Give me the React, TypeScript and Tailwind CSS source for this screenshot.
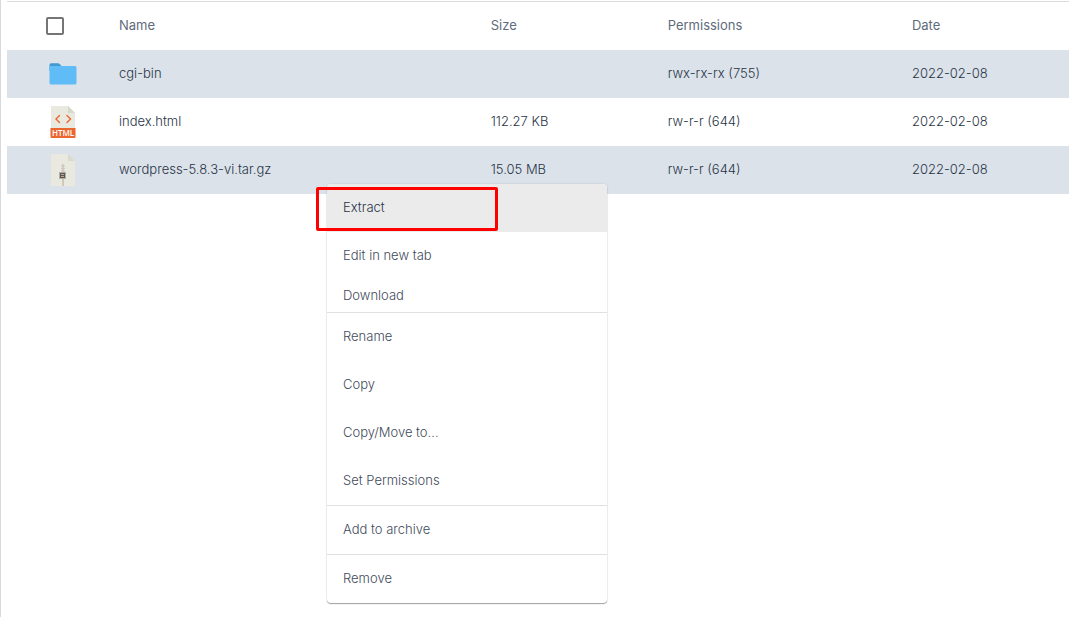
import React from "react";

type FileKind = "folder" | "html" | "archive";

interface FileEntry {
  kind: FileKind;
  name: string;
  size: string;
  permissions: string;
  date: string;
}

const files: FileEntry[] = [
  { kind: "folder", name: "cgi-bin", size: "", permissions: "rwx-rx-rx (755)", date: "2022-02-08" },
  { kind: "html", name: "index.html", size: "112.27 KB", permissions: "rw-r-r (644)", date: "2022-02-08" },
  { kind: "archive", name: "wordpress-5.8.3-vi.tar.gz", size: "15.05 MB", permissions: "rw-r-r (644)", date: "2022-02-08" },
];

const menuGroups: string[][] = [
  ["Rename", "Copy", "Copy/Move to...", "Set Permissions"],
  ["Add to archive"],
  ["Remove"],
];

function FolderIcon() {
  return (
    <svg width="28" height="22" viewBox="0 0 28 22" aria-hidden="true">
      <path d="M.5 8V2Q.5.3 2.200.3H9q1 0 1.700.7L12.500 3V8z" fill="#4399d1" />
      <path d="M.5 3H26q1.500 0 1.500 1.500V20q0 1.500-1.500 1.500H2Q.5 21.500.5 20z" fill="#60bcf7" />
    </svg>
  );
}

function HtmlIcon() {
  return (
    <svg width="26" height="32" viewBox="0 0 26 32" aria-hidden="true">
      <path d="M1 0H18L25 7V23H1z" fill="#e9e9e0" />
      <path d="M18 0L25 7H18z" fill="#d6d8c8" />
      <path d="M9.500 9.500L6 13L9.500 16.500M17 9.500L20.500 13L17 16.500" fill="none" stroke="#ec6630" strokeWidth="1.400" strokeLinecap="round" />
      <path d="M.5 22H25.500V31q0 1-1 1h-23q-1 0-1-1z" fill="#ec6630" />
      <text x="13" y="30" textAnchor="middle" fill="#fff" fontFamily="Open Sans, sans-serif" fontSize="8" fontWeight="600">HTML</text>
    </svg>
  );
}

function ArchiveIcon() {
  return (
    <svg width="26" height="32" viewBox="0 0 26 32" aria-hidden="true">
      <path d="M1 0H18L25 7V32H1z" fill="#e9e9e0" />
      <path d="M18 0L25 7H18z" fill="#d9dccd" />
      <path d="M12 10h2v8h-2z" fill="#d5cbc5" />
      <path d="M11 12h4M11 14.500h4M11 17h4" stroke="#d2c5bf" strokeWidth="1" />
      <path d="M12 25h2v7h-2z" fill="#cec8bd" />
      <path d="M9 18h7v7H9z" fill="#aeb0ad" />
      <path d="M10 19h5v5h-5z" fill="#5b5754" />
      <path d="M11 20h3v1h-3zM11 22h3v1h-3z" fill="#c7a781" />
    </svg>
  );
}

const icons: Record<FileKind, React.ReactElement> = {
  folder: <FolderIcon />,
  html: <HtmlIcon />,
  archive: <ArchiveIcon />,
};

const itemClass =
  "flex w-full items-center px-4 pb-px text-left text-[13px] font-light text-[#3f4b5b] hover:bg-[#ebebec]";

function ContextMenu() {
  return (
    <div
      role="menu"
      className="absolute left-[326px] top-[184px] w-[280px] rounded bg-white shadow-[0_1px_1px_rgba(0,0,0,0.35),0_0_2px_rgba(0,0,0,0.15)]"
    >
      <div className="relative">
        <button role="menuitem" className="flex h-12 w-full items-center rounded-t bg-[#ebebec] px-4 pb-px text-left text-[13px] font-light text-[#283446]">
          Extract
        </button>
        <span className="pointer-events-none absolute -left-[11px] top-[3px] h-[44px] w-[182px] rounded-xs border-3 border-[#ff0000]" />
      </div>
      <button role="menuitem" className={`${itemClass} h-12`}>Edit in new tab</button>
      <button role="menuitem" className={`${itemClass} h-8`}>Download</button>
      {menuGroups.map((group) => (
        <div key={group[0]} role="group" className="border-t border-[#dfe0e1]">
          {group.map((label) => (
            <button key={label} role="menuitem" className={`${itemClass} h-12 last:rounded-b`}>{label}</button>
          ))}
        </div>
      ))}
    </div>
  );
}

export default function App() {
  return (
    <main className="relative min-h-screen border-l border-[#d8d9df] bg-white pl-1.5 pt-px font-['Inter',sans-serif] text-[13px] text-[#283446]">
      <table className="w-full table-fixed border-collapse text-left">
        <thead>
          <tr className="h-12 border-t border-[#dcdddf] text-[#5e6b7c]">
            <th className="w-28 p-0 pl-[39px]">
              <input
                type="checkbox"
                aria-label="Select all files"
                className="block size-[18px] appearance-none rounded-xs border-2 border-[#757575] bg-white checked:bg-[#757575]"
              />
            </th>
            <th className="w-[35%] p-0 font-normal">Name</th>
            <th className="w-1/6 p-0 font-normal">Size</th>
            <th className="w-[23%] p-0 font-normal">Permissions</th>
            <th className="p-0 font-normal">Date</th>
          </tr>
        </thead>
        <tbody className="font-light">
          {files.map((file) => (
            <tr key={file.name} className="h-12 odd:bg-[#dbe2ea]">
              <td className="p-0">
                <div className="flex w-28 justify-center">{icons[file.kind]}</div>
              </td>
              <td className="p-0">{file.name}</td>
              <td className="p-0">{file.size}</td>
              <td className="p-0">{file.permissions}</td>
              <td className="p-0">{file.date}</td>
            </tr>
          ))}
        </tbody>
      </table>
      <ContextMenu />
    </main>
  );
}
